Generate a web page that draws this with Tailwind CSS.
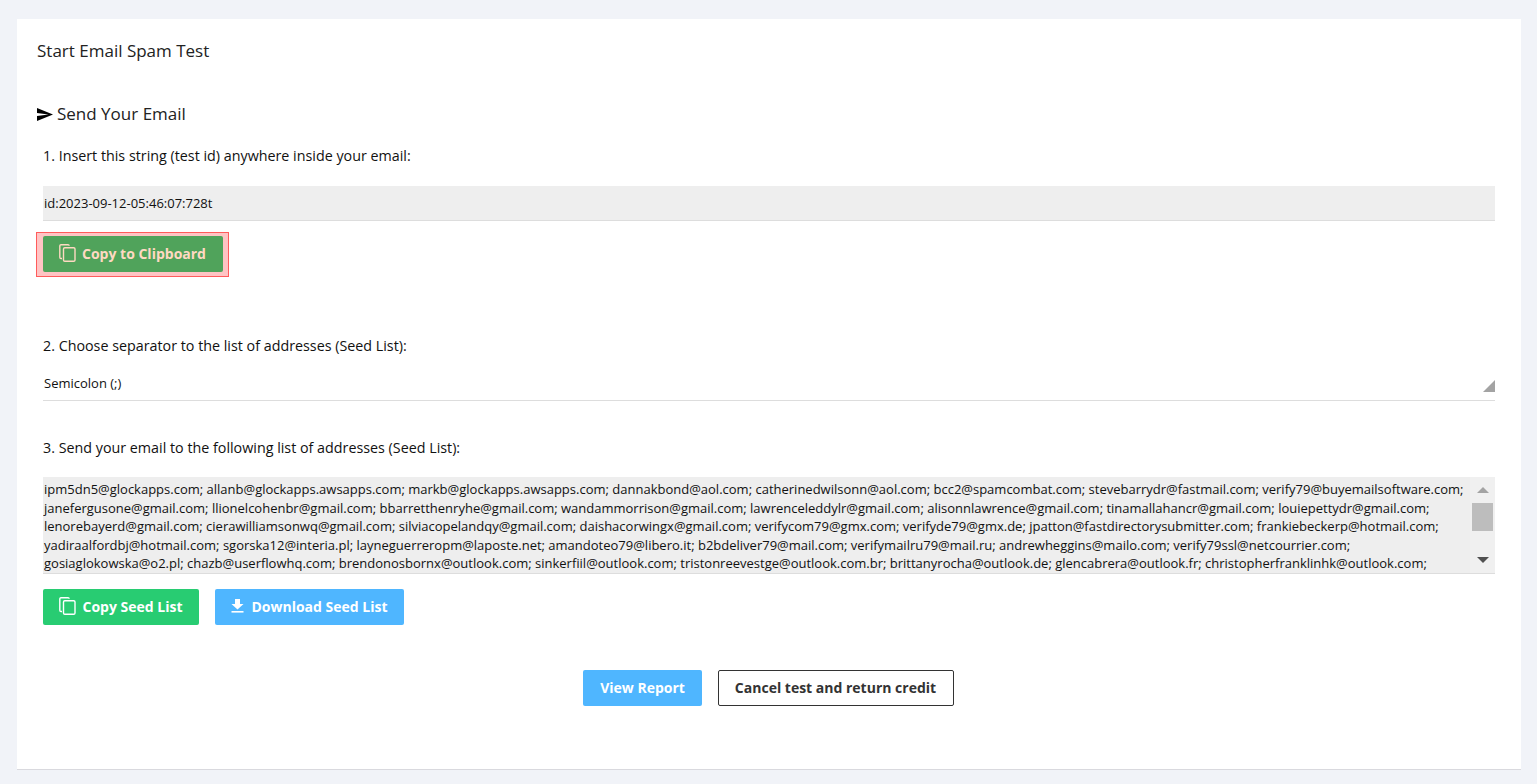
<!DOCTYPE html>
<html lang="en">
<head>
  <meta charset="utf-8"/>
  <title>Start Email Spam Test</title>
  <script src="https://cdn.jsdelivr.net/npm/@tailwindcss/browser@4"></script>
</head>
<body class="bg-[#f1f3f8] h-[784px] overflow-hidden font-['Open_Sans',sans-serif] text-[#111]">
  <div class="pt-[19px] pl-[17px] pr-[16px]">
    <main class="h-[751px] bg-white border-b border-[#d9d9de] pt-[21px] px-[20px]">
      <h1 class="text-[17px] leading-[22px] text-[#222]">Start Email Spam Test</h1>

      <h2 class="mt-[40px] flex items-center text-[17px] leading-[24px] text-[#222]">
        <svg class="w-[16px] h-[13px] mr-[4px]" viewBox="2 3 21 18" preserveAspectRatio="none"><path d="M2.01 21 23 12 2.01 3 2 10l15 2-15 2z" fill="#000"/></svg>
        Send Your Email
      </h2>

      <div class="px-[6px]">
        <p class="mt-[20px] text-[14.3px] leading-[20px]">1. Insert this string (test id) anywhere inside your email:</p>
        <div class="mt-[20px] h-[35px] bg-[#eeeeee] border-b border-[#dddddd] flex items-center pt-[1px] pl-px text-[13px]">id:2023-09-12-05:46:07:728t</div>

        <div class="mt-[11px] -ml-[7px] w-[193px] h-[45px] border border-[#ff5b5b] bg-[#ffc4c4] flex items-start justify-center pt-[3px]">
          <button class="w-[180px] h-[36px] pb-[2px] bg-[#50a35b] rounded-[2px] flex items-center justify-center text-[#ffd9c2] text-[14px] font-bold">
            <svg class="w-[17px] h-[18px] mr-[6px]" viewBox="0 0 17 18" fill="none" stroke="currentColor" stroke-width="1.4"><path d="M3 14.5 H2 a1.2 1.2 0 0 1 -1.2 -1.2 V1.8 A1.2 1.2 0 0 1 2 .7 H9 a1.2 1.2 0 0 1 1.2 1.1"/><rect x="4.5" y="3.7" width="11.5" height="13.5" rx="1.3"/></svg>
            Copy to Clipboard
          </button>
        </div>

        <p class="mt-[59px] text-[14.3px] leading-[20px]">2. Choose separator to the list of addresses (Seed List):</p>
        <div class="relative mt-[10px] h-[35px] border-b border-[#dddddd] flex items-center pt-[1px] pl-px text-[13px]">
          Semicolon (;)
          <span class="absolute right-0 bottom-[8px] w-[12px] h-[12px] bg-[#a3a3a3] [clip-path:polygon(100%_0,100%_100%,0_100%)]"></span>
        </div>

        <p class="mt-[37px] text-[14.3px] leading-[20px]">3. Send your email to the following list of addresses (Seed List):</p>
        <div class="relative mt-[19px] h-[97px] bg-[#eeeeee] border-b border-[#dddddd] pt-[3px] pl-px text-[13px] leading-[18.5px] whitespace-nowrap overflow-hidden">
          <div>ipm5dn5@glockapps.com; allanb@glockapps.awsapps.com; markb@glockapps.awsapps.com; dannakbond@aol.com; catherinedwilsonn@aol.com; bcc2@spamcombat.com; stevebarrydr@fastmail.com; verify79@buyemailsoftware.com;</div>
          <div>janefergusone@gmail.com; llionelcohenbr@gmail.com; bbarretthenryhe@gmail.com; wandammorrison@gmail.com; lawrenceleddylr@gmail.com; alisonnlawrence@gmail.com; tinamallahancr@gmail.com; louiepettydr@gmail.com;</div>
          <div>lenorebayerd@gmail.com; cierawilliamsonwq@gmail.com; silviacopelandqy@gmail.com; daishacorwingx@gmail.com; verifycom79@gmx.com; verifyde79@gmx.de; jpatton@fastdirectorysubmitter.com; frankiebeckerp@hotmail.com;</div>
          <div>yadiraalfordbj@hotmail.com; sgorska12@interia.pl; layneguerreropm@laposte.net; amandoteo79@libero.it; b2bdeliver79@mail.com; verifymailru79@mail.ru; andrewheggins@mailo.com; verify79ssl@netcourrier.com;</div>
          <div>gosiaglokowska@o2.pl; chazb@userflowhq.com; brendonosbornx@outlook.com; sinkerfiil@outlook.com; tristonreevestge@outlook.com.br; brittanyrocha@outlook.de; glencabrera@outlook.fr; christopherfranklinhk@outlook.com;</div>
          <div class="absolute right-0 top-0 bottom-0 w-[25px] bg-[#f0f0f0] flex flex-col items-center">
            <span class="mt-[10px] w-0 h-0 border-x-[6px] border-x-transparent border-b-[6px] border-b-[#a3a3a3]"></span>
            <span class="mt-[10px] w-[21px] h-[28px] bg-[#bdbdbd]"></span>
            <span class="mt-[26px] w-0 h-0 border-x-[6px] border-x-transparent border-t-[6px] border-t-[#505050]"></span>
          </div>
        </div>

        <div class="mt-[15px] flex gap-[16px]">
          <button class="w-[156px] h-[36px] pb-[2px] bg-[#28cc72] rounded-[2px] flex items-center justify-center text-white text-[14px] font-bold">
            <svg class="w-[17px] h-[18px] mr-[6px]" viewBox="0 0 17 18" fill="none" stroke="currentColor" stroke-width="1.4"><path d="M3 14.5 H2 a1.2 1.2 0 0 1 -1.2 -1.2 V1.8 A1.2 1.2 0 0 1 2 .7 H9 a1.2 1.2 0 0 1 1.2 1.1"/><rect x="4.5" y="3.7" width="11.5" height="13.5" rx="1.3"/></svg>
            Copy Seed List
          </button>
          <button class="w-[189px] h-[36px] pb-[2px] bg-[#4fb6ff] rounded-[2px] flex items-center justify-center text-white text-[14px] font-bold">
            <svg class="w-[13px] h-[14px] mr-[7px]" viewBox="0 0 13 14" fill="currentColor"><path d="M4 0 H9 V5 H12.5 L6.5 10.5 L0.5 5 H4 Z"/><rect x="0.5" y="12" width="12" height="1.6"/></svg>
            Download Seed List
          </button>
        </div>

        <div class="mt-[45px] pr-[2px] flex justify-center gap-[16px]">
          <button class="w-[119px] h-[36px] pb-[2px] pl-px bg-[#4fb6ff] rounded-[2px] text-white text-[14px] font-bold">View Report</button>
          <button class="w-[236px] h-[36px] pb-[2px] border border-[#333] rounded-[2px] text-[#333] text-[14px] font-bold">Cancel test and return credit</button>
        </div>
      </div>
    </main>
  </div>
</body>
</html>
